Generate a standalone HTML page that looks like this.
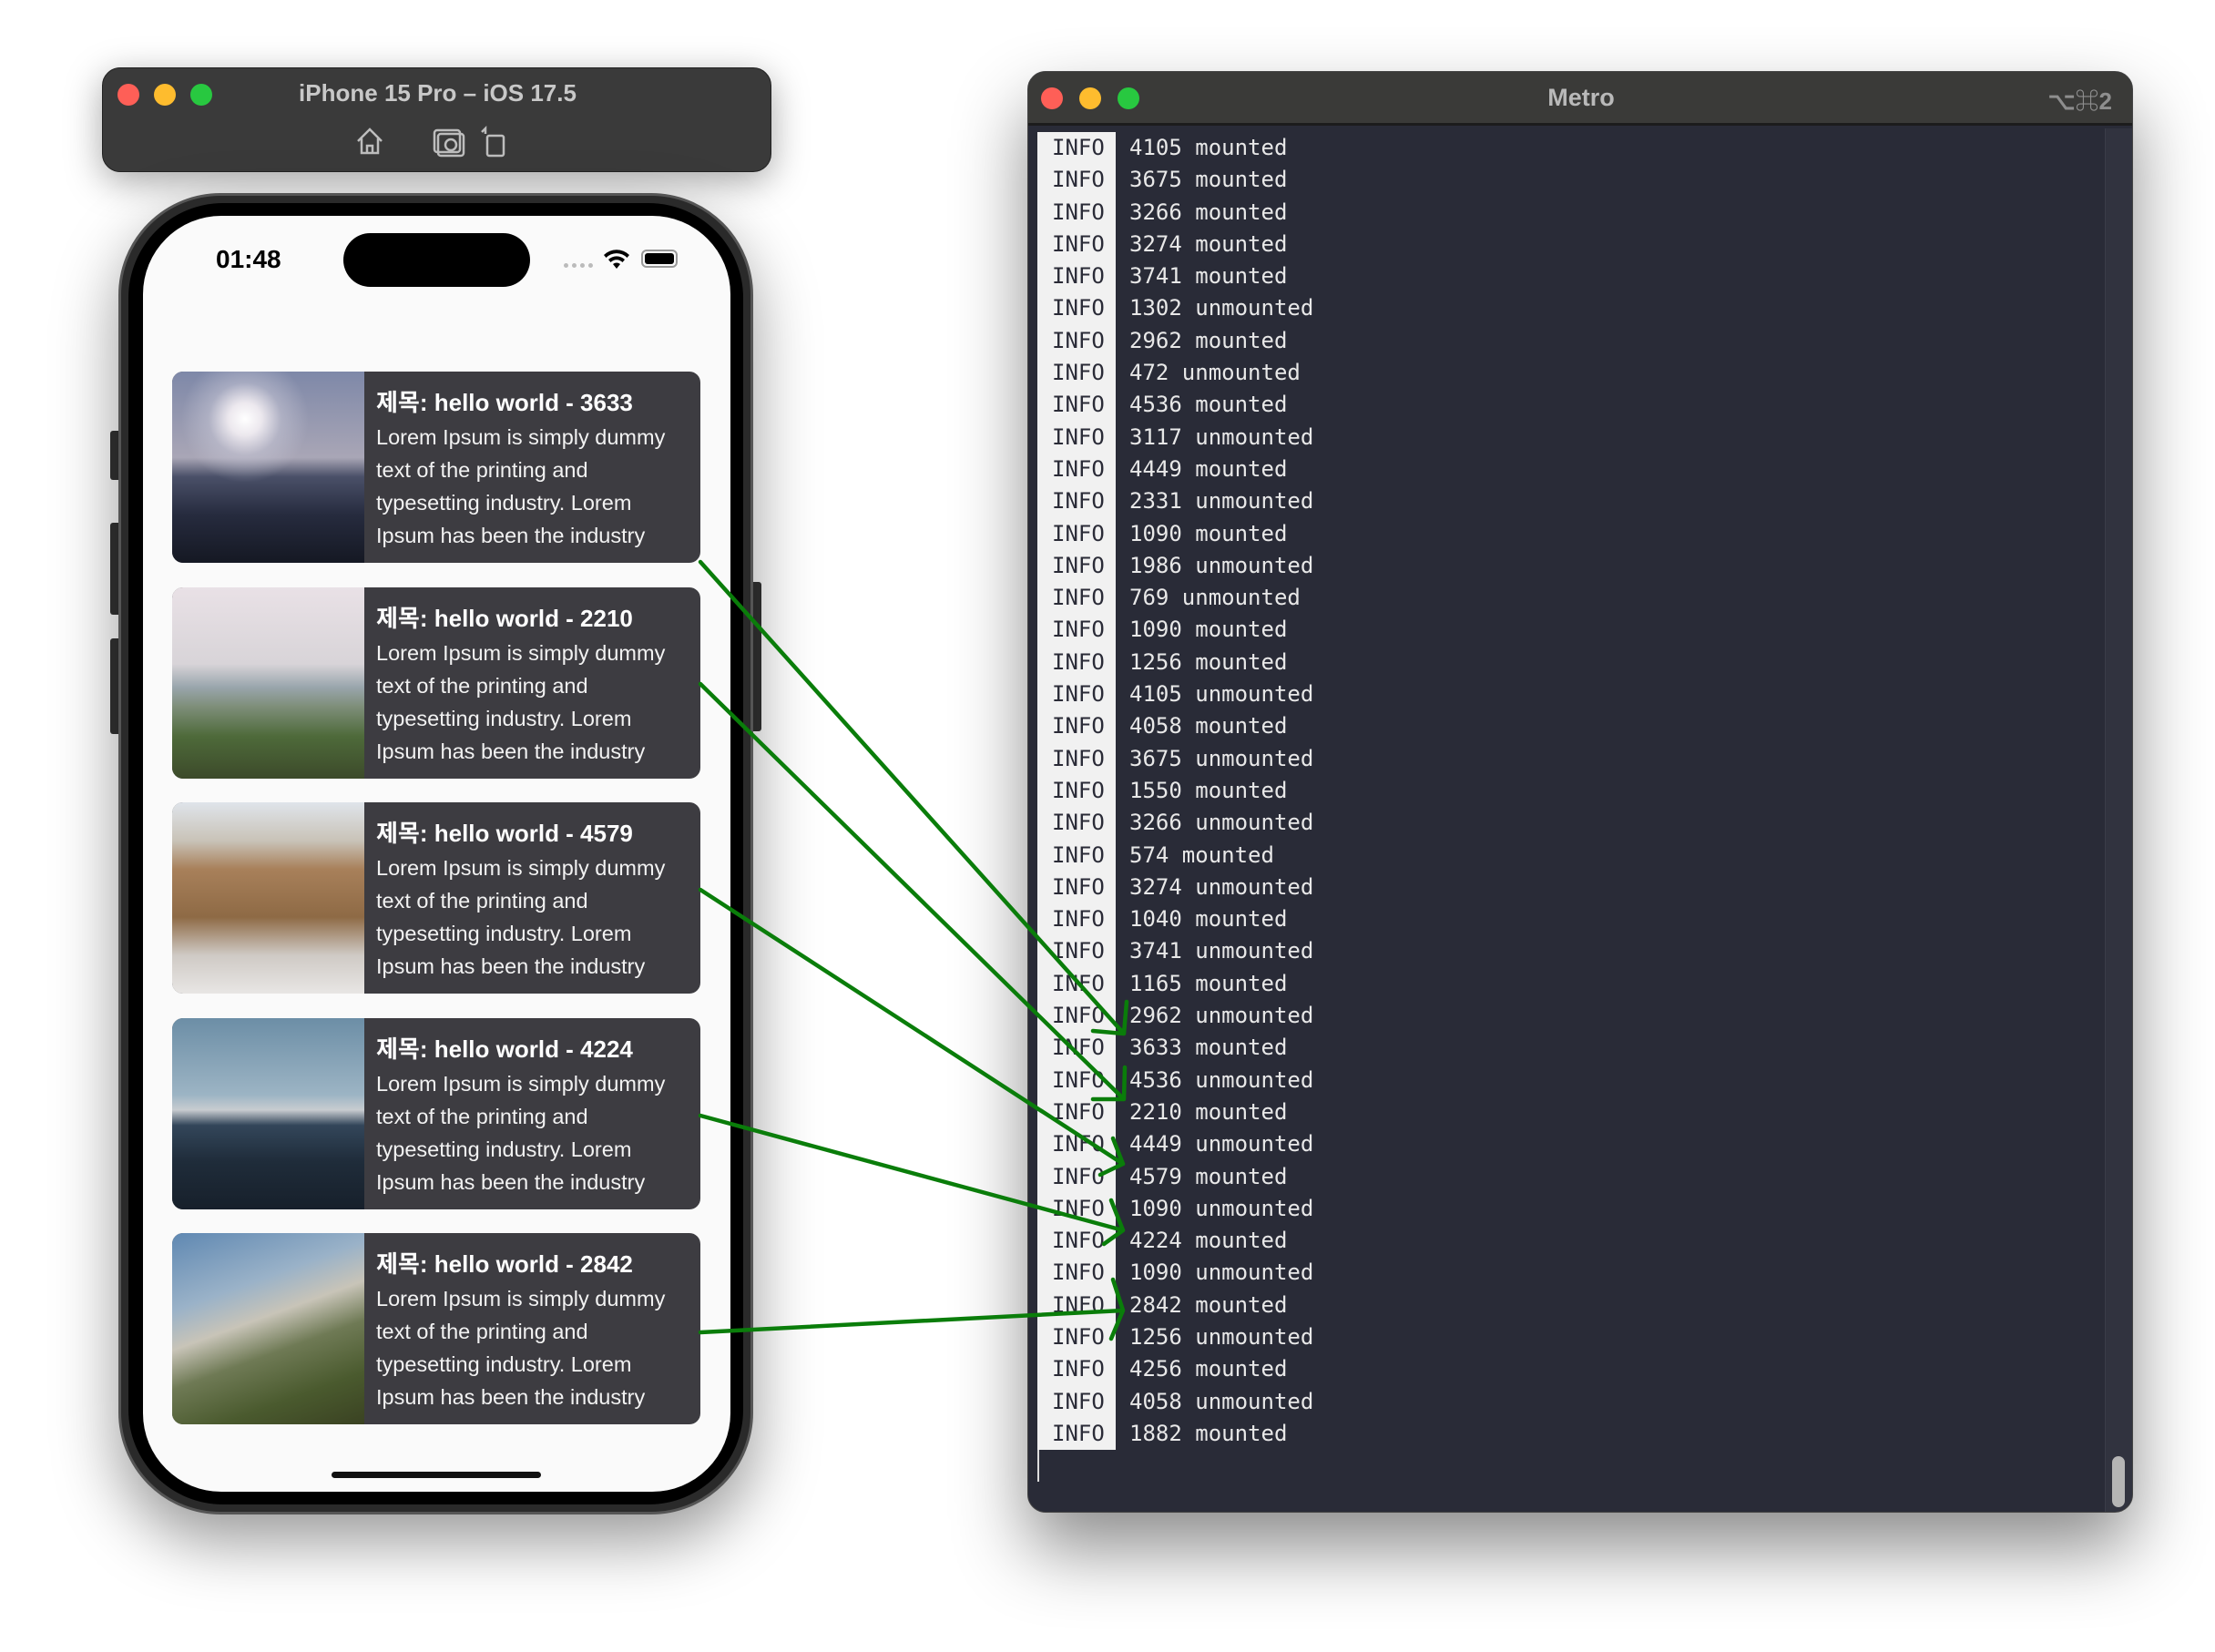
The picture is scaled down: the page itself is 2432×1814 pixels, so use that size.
<!DOCTYPE html>
<html><head><meta charset="utf-8"><style>
*{margin:0;padding:0;box-sizing:border-box}
body{width:2432px;height:1814px;background:#fff;position:relative;overflow:hidden;font-family:"Liberation Sans","Noto Sans CJK KR",sans-serif}
.abs{position:absolute}
.toolbar{left:112px;top:74px;width:735px;height:115px;background:#3a3a3a;border-radius:20px;box-shadow:0 10px 40px rgba(0,0,0,.35);border:1px solid #222}
.dot{position:absolute;width:24px;height:24px;border-radius:50%}
.phone{left:130px;top:212px;width:697px;height:1451px;background:#2a2a2a;border-radius:112px;box-shadow:0 30px 70px rgba(0,0,0,.4);border:3px solid #555}
.bezel{position:absolute;left:8px;top:8px;right:8px;bottom:8px;background:#000;border-radius:104px}
.screen{left:157px;top:237px;width:645px;height:1401px;background:#fafafa;border-radius:86px;overflow:hidden}
.card{position:absolute;left:32px;width:580px;height:210px;background:#3d3c41;border-radius:12px;overflow:hidden}
.card .img{position:absolute;left:0;top:0;width:211px;height:100%}
.card .t{position:absolute;left:224px;top:14px;color:#fff;font-size:26px;font-weight:bold;white-space:nowrap}
.card .b{position:absolute;left:224px;top:54px;color:#f2f2f2;font-size:23.5px;line-height:36px;white-space:nowrap}
.metro{left:1128px;top:78px;width:1214px;height:1583px;background:#292b37;border-radius:20px;overflow:hidden;box-shadow:0 40px 80px rgba(0,0,0,.45);border:1px solid #444}
.tb{position:absolute;left:0;top:0;right:0;height:59px;background:#3a3a38;border-bottom:3px solid #1c1c1c}
.log{position:absolute;left:10px;top:66px;font-family:"DejaVu Sans Mono","Liberation Mono",monospace;font-size:24px;line-height:35.3px;color:#e8e8e8;white-space:pre}
.log .i{display:inline-block;width:86px;padding-left:16px;background:#f1f1f1;color:#2a2b37;margin-right:15px}
</style></head><body>

<div class="abs toolbar">
 <div class="dot" style="left:16px;top:17px;background:#fe5f57"></div>
 <div class="dot" style="left:56px;top:17px;background:#febc2e"></div>
 <div class="dot" style="left:96px;top:17px;background:#28c840"></div>
 <div class="abs" style="left:0;width:735px;top:12px;text-align:center;color:#c8c8c8;font-size:26px;font-weight:bold">iPhone 15 Pro – iOS 17.5</div>
 <svg class="abs" style="left:276px;top:62px" width="230" height="36" viewBox="0 0 230 36" fill="none" stroke="#bdbdbd" stroke-width="2.5">
  <path d="M4 18 L17 5 L30 18 M8 15 V31 H26 V15 M14 31 V23 H20 V31"/>
  <rect x="88" y="6" width="28" height="24" rx="3"/><rect x="92" y="10" width="28" height="24" rx="3"/><circle cx="106" cy="22" r="6"/>
  <rect x="146" y="12" width="18" height="22" rx="2"/><path d="M144 10 V4 L140 8"/>
 </svg>
</div>

<div class="abs" style="left:121px;top:473px;width:12px;height:54px;background:#333;border-radius:3px"></div>
<div class="abs" style="left:121px;top:574px;width:12px;height:101px;background:#333;border-radius:3px"></div>
<div class="abs" style="left:121px;top:701px;width:12px;height:105px;background:#333;border-radius:3px"></div>
<div class="abs" style="left:824px;top:639px;width:12px;height:164px;background:#333;border-radius:3px"></div>
<div class="abs phone"><div class="bezel"></div></div>

<div class="abs screen">
 <div class="abs" style="left:80px;top:32px;font-size:28px;font-weight:bold;color:#000">01:48</div>
 <div class="abs" style="left:220px;top:19px;width:205px;height:59px;background:#000;border-radius:30px"></div>
 <div class="abs" style="left:462px;top:52px;width:32px;height:5px;border-top:5px dotted #bbb"></div>
 <svg class="abs" style="left:505px;top:36px" width="30" height="24" viewBox="0 0 30 24"><path d="M15 22 L11 17 A6 6 0 0 1 19 17 Z M6 12 A13 13 0 0 1 24 12 L21.5 15 A9 9 0 0 0 8.5 15Z M1 7 A20 20 0 0 1 29 7 L26.5 10 A16 16 0 0 0 3.5 10Z" fill="#000"/></svg>
 <div class="abs" style="left:547px;top:37px;width:40px;height:20px;border:2px solid #999;border-radius:6px;padding:2px"><div style="width:100%;height:100%;background:#000;border-radius:3px"></div></div>

 <div class="card" style="top:171px"><div class="img" style="background:radial-gradient(circle at 80px 52px,#fff 0,#ece8ee 18px,rgba(200,200,215,.5) 40px,rgba(150,160,190,0) 70px),linear-gradient(#7e88a8 0%,#a9a6b6 45%,#4a5068 55%,#262b3e 75%,#151823 100%)"></div><div class="t">제목: hello world - 3633</div><div class="b">Lorem Ipsum is simply dummy<br>text of the printing and<br>typesetting industry. Lorem<br>Ipsum has been the industry</div></div>
 <div class="card" style="top:408px"><div class="img" style="background:linear-gradient(#e9e1e6 0%,#d8d4d8 40%,#9aa6ad 52%,#7f8f7b 62%,#4e6a3a 78%,#3c4a2a 100%)"></div><div class="t">제목: hello world - 2210</div><div class="b">Lorem Ipsum is simply dummy<br>text of the printing and<br>typesetting industry. Lorem<br>Ipsum has been the industry</div></div>
 <div class="card" style="top:644px"><div class="img" style="background:linear-gradient(#dfe4ea 0%,#c9c3b8 20%,#a8805a 35%,#8e6a45 60%,#cfcac5 80%,#e8e6e4 100%)"></div><div class="t">제목: hello world - 4579</div><div class="b">Lorem Ipsum is simply dummy<br>text of the printing and<br>typesetting industry. Lorem<br>Ipsum has been the industry</div></div>
 <div class="card" style="top:881px"><div class="img" style="background:linear-gradient(#6c8ea6 0%,#9cb4c4 40%,#c8ccd0 48%,#33465a 56%,#1f2c3a 75%,#17202b 100%)"></div><div class="t">제목: hello world - 4224</div><div class="b">Lorem Ipsum is simply dummy<br>text of the printing and<br>typesetting industry. Lorem<br>Ipsum has been the industry</div></div>
 <div class="card" style="top:1117px"><div class="img" style="background:linear-gradient(160deg,#5f88b2 0%,#9ab2c8 30%,#c8c4b8 45%,#6f7a55 60%,#4a5a2e 80%,#3a4222 100%)"></div><div class="t">제목: hello world - 2842</div><div class="b">Lorem Ipsum is simply dummy<br>text of the printing and<br>typesetting industry. Lorem<br>Ipsum has been the industry</div></div>
 <div class="abs" style="left:207px;top:1379px;width:230px;height:7px;background:#111;border-radius:4px"></div>
</div>

<div class="abs metro">
 <div class="tb">
  <div class="dot" style="left:14px;top:17px;background:#fe5f57"></div>
  <div class="dot" style="left:56px;top:17px;background:#febc2e"></div>
  <div class="dot" style="left:98px;top:17px;background:#28c840"></div>
  <div class="abs" style="left:0;width:1214px;top:13px;text-align:center;color:#b9b9b9;font-size:27px;font-weight:bold">Metro</div>
  <div class="abs" style="right:22px;top:12px;color:#8e8e8e;font-size:26px;font-weight:bold">⌥⌘2</div>
 </div>
 <div class="abs" style="right:0;top:62px;width:30px;bottom:0;background:#31333f;border-left:1px solid #3a3c48"></div>
 <div class="abs" style="right:8px;top:1520px;width:14px;height:56px;background:#b5b5b5;border-radius:7px"></div>
 <div class="abs" style="left:10px;top:1512px;width:2px;height:36px;background:#ddd"></div>
<div class="log"><span class="i">INFO</span>4105 mounted
<span class="i">INFO</span>3675 mounted
<span class="i">INFO</span>3266 mounted
<span class="i">INFO</span>3274 mounted
<span class="i">INFO</span>3741 mounted
<span class="i">INFO</span>1302 unmounted
<span class="i">INFO</span>2962 mounted
<span class="i">INFO</span>472 unmounted
<span class="i">INFO</span>4536 mounted
<span class="i">INFO</span>3117 unmounted
<span class="i">INFO</span>4449 mounted
<span class="i">INFO</span>2331 unmounted
<span class="i">INFO</span>1090 mounted
<span class="i">INFO</span>1986 unmounted
<span class="i">INFO</span>769 unmounted
<span class="i">INFO</span>1090 mounted
<span class="i">INFO</span>1256 mounted
<span class="i">INFO</span>4105 unmounted
<span class="i">INFO</span>4058 mounted
<span class="i">INFO</span>3675 unmounted
<span class="i">INFO</span>1550 mounted
<span class="i">INFO</span>3266 unmounted
<span class="i">INFO</span>574 mounted
<span class="i">INFO</span>3274 unmounted
<span class="i">INFO</span>1040 mounted
<span class="i">INFO</span>3741 unmounted
<span class="i">INFO</span>1165 mounted
<span class="i">INFO</span>2962 unmounted
<span class="i">INFO</span>3633 mounted
<span class="i">INFO</span>4536 unmounted
<span class="i">INFO</span>2210 mounted
<span class="i">INFO</span>4449 unmounted
<span class="i">INFO</span>4579 mounted
<span class="i">INFO</span>1090 unmounted
<span class="i">INFO</span>4224 mounted
<span class="i">INFO</span>1090 unmounted
<span class="i">INFO</span>2842 mounted
<span class="i">INFO</span>1256 unmounted
<span class="i">INFO</span>4256 mounted
<span class="i">INFO</span>4058 unmounted
<span class="i">INFO</span>1882 mounted</div>
</div>

<svg class="abs" style="left:0;top:0" width="2432" height="1814" fill="none" stroke="#0a7d0a" stroke-width="4.5" stroke-linecap="round" stroke-linejoin="round">
 <path d="M769 617 L1234 1135 M1200 1132 L1234 1135 L1237 1100"/>
 <path d="M769 751 L1234 1207 M1200 1207 L1234 1207 L1235 1172"/>
 <path d="M769 977 L1233 1278 M1222 1250 L1233 1278 L1208 1290"/>
 <path d="M769 1225 L1233 1351 M1220 1318 L1233 1351 L1212 1366"/>
 <path d="M769 1463 L1233 1439 M1222 1405 L1233 1439 L1220 1470"/>
</svg>
</body></html>
